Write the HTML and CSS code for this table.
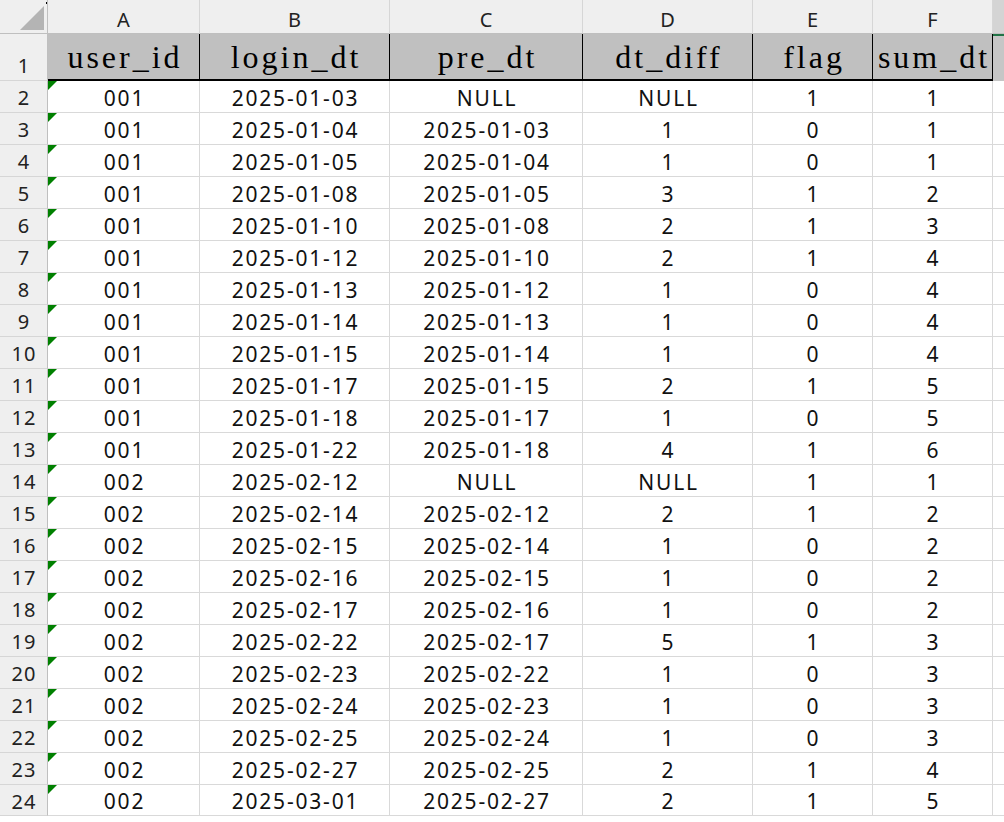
FILE: index.html
```html
<!DOCTYPE html>
<html><head><meta charset="utf-8"><link rel="stylesheet" href="styles.css"></head>
<body>
<div class="sheet" id="sheet">
  <div class="corner"><span class="tri"></span><span class="dot"></span></div>
  <div class="ch">A</div><div class="ch">B</div><div class="ch">C</div><div class="ch">D</div><div class="ch">E</div><div class="ch">F</div><div class="ch chg"></div>
</div>
<script src="app.js"></script>
</body></html>
```
FILE: styles.css
```css
html,body{margin:0;padding:0;background:#fff;overflow:hidden}
.sheet{display:grid;grid-template-columns:48px 152px 190px 193px 170px 120px 120px 12px;grid-template-rows:34px 47px repeat(22,32px);width:1005px;font-family:"Noto Sans",sans-serif}
.corner{position:relative;background:#efefef;border-right:1px solid #bfbfbf;border-bottom:1px solid #bfbfbf;box-sizing:border-box}
.tri{position:absolute;right:3px;bottom:3px;width:0;height:0;border-left:24px solid transparent;border-bottom:24px solid #b4b4b4}
.dot{position:absolute;right:0;top:2px;width:1px;height:2px;background:#000}
.ch{background:#efefef;border-right:1px solid #d6d6d6;border-bottom:1px solid #bfbfbf;box-sizing:border-box;display:flex;align-items:center;justify-content:center;font-size:20px;color:#222;padding-top:6px}
.chg{background:#d4d4d4}
.rh{background:#efefef;border-right:1px solid #bfbfbf;border-bottom:1px solid #d6d6d6;box-sizing:border-box;display:flex;align-items:center;justify-content:center;font-size:20px;letter-spacing:1px;padding-left:1px;padding-top:2px;color:#222}
.rh1{align-items:flex-end;padding-bottom:1px}
.hd{background:#c0c0c0;border-right:1px solid #000;border-bottom:2px solid #000;box-sizing:border-box;display:flex;align-items:center;justify-content:center;font-family:"Liberation Serif",serif;font-size:32px;letter-spacing:3px;padding-left:3px;color:#000;padding-top:1px}
.hdg{background:#c6c6c6;border-right:none;border-top:2px solid #217346;border-bottom:1px solid #c6c6c6}
.c{border-right:1px solid #d9d9d9;border-bottom:1px solid #d9d9d9;box-sizing:border-box;display:flex;align-items:center;justify-content:center;font-size:21px;color:#111;position:relative;letter-spacing:1.8px;padding-left:2px;padding-top:2px}
.c.g{border-right:none}
.c.t::before{content:"";position:absolute;left:0;top:0;border-top:9px solid #008000;border-right:9px solid transparent}
```
FILE: app.js
```js
const rows=[
["001","2025-01-03","NULL","NULL","1","1"],
["001","2025-01-04","2025-01-03","1","0","1"],
["001","2025-01-05","2025-01-04","1","0","1"],
["001","2025-01-08","2025-01-05","3","1","2"],
["001","2025-01-10","2025-01-08","2","1","3"],
["001","2025-01-12","2025-01-10","2","1","4"],
["001","2025-01-13","2025-01-12","1","0","4"],
["001","2025-01-14","2025-01-13","1","0","4"],
["001","2025-01-15","2025-01-14","1","0","4"],
["001","2025-01-17","2025-01-15","2","1","5"],
["001","2025-01-18","2025-01-17","1","0","5"],
["001","2025-01-22","2025-01-18","4","1","6"],
["002","2025-02-12","NULL","NULL","1","1"],
["002","2025-02-14","2025-02-12","2","1","2"],
["002","2025-02-15","2025-02-14","1","0","2"],
["002","2025-02-16","2025-02-15","1","0","2"],
["002","2025-02-17","2025-02-16","1","0","2"],
["002","2025-02-22","2025-02-17","5","1","3"],
["002","2025-02-23","2025-02-22","1","0","3"],
["002","2025-02-24","2025-02-23","1","0","3"],
["002","2025-02-25","2025-02-24","1","0","3"],
["002","2025-02-27","2025-02-25","2","1","4"],
["002","2025-03-01","2025-02-27","2","1","5"]];
const s=document.getElementById('sheet');
let h='<div class="rh rh1">1</div>';
["user_id","login_dt","pre_dt","dt_diff","flag","sum_dt"].forEach(t=>h+=`<div class="hd">${t}</div>`);
h+='<div class="hd hdg"></div>';
rows.forEach((r,i)=>{
  h+=`<div class="rh">${i+2}</div>`;
  r.forEach((v,j)=>h+=`<div class="c${j==0?' t':''}">${v}</div>`);
  h+='<div class="c g"></div>';
});
s.insertAdjacentHTML('beforeend',h);
```
